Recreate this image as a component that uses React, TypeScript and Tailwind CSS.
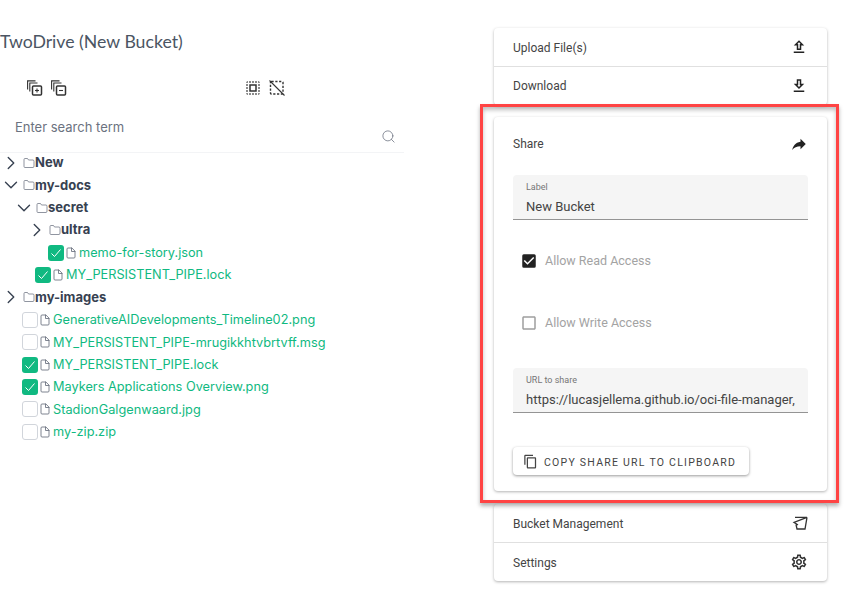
import type { ReactNode } from 'react'
import { ChevronDown, ChevronRight, Search } from 'lucide-react'
import { FiFile, FiFolder } from 'react-icons/fi'
import {
  MdCheckBox,
  MdCheckBoxOutlineBlank,
  MdOutlineContentCopy,
  MdOutlineDownload,
  MdOutlineSelectAll,
  MdOutlineSettings,
  MdOutlineUpload,
  MdReply,
} from 'react-icons/md'

function BucketIcon() {
  return (
    <svg width="16" height="16" viewBox="0 0 16 16" fill="none" stroke="#333" strokeWidth="1.3">
      <path d="M3 2.3H15L2 7.3 6 10M15 2.3 13 14H5L4 9.5" />
    </svg>
  )
}

function StackIcon({ plus, className }: { plus?: boolean; className?: string }) {
  return (
    <svg width="16" height="16" viewBox="0 0 16 16" fill="none" stroke="#333" strokeWidth="1.1" className={className}>
      <path d="M.6 9.5V.9H8.5M2.8 11.5V3H10.5" />
      <rect x="5.5" y="6" width="9" height="9" rx="1" strokeWidth="1.5" />
      <path d="M8 10.5h4" />
      {plus && <path d="M10 8.5v4" />}
    </svg>
  )
}

function DeselectIcon() {
  return (
    <svg width="16" height="16" viewBox="0 0 16 16" fill="none" stroke="#333" strokeWidth="1.4" className="ml-[7px]">
      <rect x="1.5" y="1.5" width="12.5" height="12.5" rx="1" strokeDasharray="2.2 1.6" />
      <path d="M.5.5 15.5 15.5" strokeWidth="1.1" />
    </svg>
  )
}

function Folder({ indent, open, name }: { indent: number; open?: boolean; name: string }) {
  return (
    <div className="flex h-[22.4px] items-center" style={{ paddingLeft: indent }}>
      <span className="flex w-[16px] shrink-0 justify-center text-[#374151]">
        {open ? <ChevronDown size={22} strokeWidth={1.5} className="shrink-0" /> : <ChevronRight size={22} strokeWidth={1.5} className="shrink-0" />}
      </span>
      <FiFolder size={12} strokeWidth={1.5} className="ml-[4px] shrink-0 text-[#6b7280]" />
      <span className="text-[13px] font-bold text-[#374151]">{name}</span>
    </div>
  )
}

function File({ indent, checked, name }: { indent: number; checked?: boolean; name: string }) {
  return (
    <div className="flex h-[22.4px] items-center" style={{ paddingLeft: indent }}>
      {checked ? (
        <span className="flex h-[16px] w-[16px] shrink-0 items-center justify-center rounded-[3px] bg-[#10b981]">
          <svg width="12" height="12" viewBox="0 0 12 12" fill="none" stroke="#fff" strokeWidth="1">
            <path d="M1.5 6.5 4.5 9.5 10.5 2.5" />
          </svg>
        </span>
      ) : (
        <span className="h-[16px] w-[16px] shrink-0 rounded-[3px] border border-[#d1d5db] bg-white" />
      )}
      <FiFile size={12} strokeWidth={1.75} className="ml-[1px] shrink-0 text-[#6b7280]" />
      <span className="ml-[2px] text-[12.75px] whitespace-nowrap text-[#10b981]">{name}</span>
    </div>
  )
}

function Row({ label, icon, first, low }: { label: string; icon: ReactNode; first?: boolean; low?: boolean }) {
  return (
    <div className={`flex items-center justify-between pr-[19px] pl-[19px] ${first ? 'h-[38px]' : 'h-[39px] border-t border-[#e0e0e0]'}`}>
      <span className={`text-[12px] text-[#444] ${low ? 'mt-[2px]' : ''}`}>{label}</span>
      {icon}
    </div>
  )
}

function Field({ label, value }: { label: string; value: string }) {
  return (
    <div className="h-[45px] overflow-hidden rounded-t-[4px] border-b border-[#949494] bg-[#f5f5f5] px-[13px] pt-[7px]">
      <div className="text-[9px] leading-[10px] text-[#757575]">{label}</div>
      <div className="mt-[6px] text-[13px] leading-[18px] whitespace-nowrap text-[#444]">{value}</div>
    </div>
  )
}

export default function App() {
  return (
    <div className="relative flex h-[614px] w-[851px] overflow-hidden bg-white font-['Roboto',sans-serif]">
      <div className="w-[404px] shrink-0 font-['Inter',sans-serif]">
        <h1 className="mt-[31px] font-['Lato',sans-serif] text-[17.7px] leading-[22px] text-[#4b5563]">TwoDrive (New Bucket)</h1>

        <div className="mt-[26px] flex h-[18px] items-center pl-[27px]">
          <StackIcon plus />
          <StackIcon className="ml-[8px]" />
          <MdOutlineSelectAll size={18} className="ml-[177px] text-[#333]" />
          <DeselectIcon />
        </div>

        <div className="mt-[11px] flex h-[45px] justify-between border-b border-[#f3f4f6] pr-[8px] pl-[15px]">
          <span className="mt-[10px] text-[13px] text-[#6b7280]">Enter search term</span>
          <Search size={15} strokeWidth={1.25} className="mt-[21px] text-[#6b7280]" />
        </div>

        <div className="mt-[-1.2px]">
          <Folder indent={3} name="New" />
          <Folder indent={3} open name="my-docs" />
          <Folder indent={16} open name="secret" />
          <Folder indent={29} name="ultra" />
          <File indent={48} checked name="memo-for-story.json" />
          <File indent={35} checked name="MY_PERSISTENT_PIPE.lock" />
          <Folder indent={3} name="my-images" />
          <File indent={22} name="GenerativeAIDevelopments_Timeline02.png" />
          <File indent={22} name="MY_PERSISTENT_PIPE-mrugikkhtvbrtvff.msg" />
          <File indent={22} checked name="MY_PERSISTENT_PIPE.lock" />
          <File indent={22} checked name="Maykers Applications Overview.png" />
          <File indent={22} name="StadionGalgenwaard.jpg" />
          <File indent={22} name="my-zip.zip" />
        </div>
      </div>

      <div className="ml-[90px] w-[333px] shrink-0 pt-[28px]">
        <div className="rounded-[4px] bg-white shadow-[0_1px_3px_rgba(0,0,0,0.3)]">
          <Row first low label="Upload File(s)" icon={<MdOutlineUpload size={18} className="text-[#222]" />} />
          <Row label="Download" icon={<MdOutlineDownload size={18} className="text-[#222]" />} />
        </div>

        <div className="mt-[12px] h-[374px] rounded-[4px] bg-white px-[19px] shadow-[0_1px_3px_rgba(0,0,0,0.3)]">
          <div className="mb-[4px] flex h-[54px] items-center justify-between">
            <span className="text-[12px] text-[#444]">Share</span>
            <MdReply size={18} className="-scale-x-100 text-[#222]" />
          </div>
          <Field label="Label" value="New Bucket" />
          <label className="mt-[31px] flex h-[20px] items-center pl-[7px] text-[12.5px] text-[#a3a3a3]">
            <MdCheckBox size={18} className="mr-[7px] text-[#222]" />
            Allow Read Access
          </label>
          <label className="mt-[42px] flex h-[20px] items-center pl-[7px] text-[12.5px] text-[#a3a3a3]">
            <MdCheckBoxOutlineBlank size={18} className="mr-[7px] text-[#9e9e9e]" />
            Allow Write Access
          </label>
          <div className="mt-[35px]">
            <Field label="URL to share" value="https://lucasjellema.github.io/oci-file-manager," />
          </div>
          <button className="mt-[34px] flex h-[28px] w-[236px] items-center rounded-[4px] bg-white pl-[10px] text-[10.5px] tracking-[1.25px] text-[#444] uppercase shadow-[0_1px_3px_rgba(0,0,0,0.4)]">
            <MdOutlineContentCopy size={15} className="mr-[6px]" />
            <span className="mt-[3px]">Copy share URL to clipboard</span>
          </button>
        </div>

        <div className="mt-[13px] rounded-[4px] bg-white shadow-[0_1px_3px_rgba(0,0,0,0.3)]">
          <Row first low label="Bucket Management" icon={<BucketIcon />} />
          <Row low label="Settings" icon={<MdOutlineSettings size={18} className="text-[#333]" />} />
        </div>
      </div>

      <div className="absolute top-[104px] left-[480px] h-[399px] w-[359px] border-[3px] border-[#ff4444] shadow-[0_3px_4px_rgba(0,0,0,0.3),inset_0_3px_4px_rgba(0,0,0,0.25)]" />
    </div>
  )
}
